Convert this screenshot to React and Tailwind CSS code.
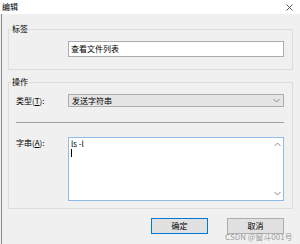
import React from "react";

const font = { fontFamily: '"Noto Sans CJK SC", "Noto Sans", sans-serif' };

function Chevron({ up = false }) {
  return (
    <svg width="7" height="5" viewBox="0 0 7 5" className="block">
      <path
        d={up ? "M0.5 4 L3.5 1 L6.5 4" : "M0.5 1 L3.5 4 L6.5 1"}
        fill="none"
        stroke="#8a8a8a"
        strokeWidth="1"
      />
    </svg>
  );
}

export default function App() {
  return (
    <div
      className="relative w-[300px] h-[244px] overflow-hidden bg-[#f0f0f0] text-black flex flex-col text-[8px] leading-[10px]"
      style={font}
    >
      {/* Title bar */}
      <div className="h-[14px] bg-white flex items-center justify-between pl-[2px] pr-[7px]">
        <span className="text-[8px] leading-[10px]">编辑</span>
        <svg width="7" height="7" viewBox="0 0 7 7">
          <path d="M0.5 0.5 L6.5 6.5 M6.5 0.5 L0.5 6.5" stroke="#444" strokeWidth="0.9" fill="none" />
        </svg>
      </div>

      {/* Body */}
      <div className="flex-1 ml-px border-l border-[#8c8c8c] flex flex-col pt-[10px] pl-[6px] pr-[7px]">
        {/* Group 1 */}
        <fieldset className="border border-[#dcdcdc]">
          <legend className="ml-[2px] px-px text-[8px] leading-[10px]">标签</legend>
          <div className="pl-[59px] pr-[8px] pt-[7px] pb-[12px]">
            <div className="h-[16px] bg-white border border-[#abadb3] flex items-center pl-[2px] text-[8px]">
              查看文件列表
            </div>
          </div>
        </fieldset>

        {/* Group 2 */}
        <fieldset className="mt-[7px] border border-[#dcdcdc]">
          <legend className="ml-[2px] px-px text-[8px] leading-[10px]">操作</legend>
          <div className="pl-[7px] pr-[8px] pt-[7px] pb-[7px]">
            <div className="flex items-center">
              <span className="w-[52px]">
                类型(<span className="underline">T</span>):
              </span>
              <div className="flex-1 h-[13px] bg-[#e5e5e5] border border-[#acacac] flex items-center justify-between pl-[3px] pr-[3px]">
                <span>发送字符串</span>
                <Chevron />
              </div>
            </div>
            <div className="mt-[15px] h-px bg-[#a0a0a0]" />
            <div className="mt-[14px] flex items-start">
              <span className="w-[52px] mt-[1px]">
                字串(<span className="underline">A</span>):
              </span>
              <div className="flex-1 h-[64px] bg-white border border-[#8fbbe6] flex">
                <div className="flex-1 pl-[2px] pt-px flex flex-col">
                  <span className="leading-[9px]">ls -l</span>
                  <span className="mt-px w-px h-[8px] bg-black" />
                </div>
                <div className="w-[11px] flex flex-col items-center justify-between pt-[4px] pb-[4px]">
                  <Chevron up />
                  <Chevron />
                </div>
              </div>
            </div>
          </div>
        </fieldset>

        {/* Buttons */}
        <div className="mt-[9px] flex justify-end gap-[19px] pr-[9px]">
          <button className="w-[57px] h-[16px] bg-[#e1e1e1] border border-[#0078d7] text-[8px] leading-[10px]">
            确定
          </button>
          <button className="w-[57px] h-[16px] bg-[#e1e1e1] border border-[#adadad] text-[8px] leading-[10px]">
            取消
          </button>
        </div>
      </div>

      {/* Watermark */}
      <div className="absolute left-[225px] top-[232px] text-[8px] leading-[10px] text-[#9a9a9a] whitespace-nowrap">
        CSDN @窗斗001号
      </div>
    </div>
  );
}
